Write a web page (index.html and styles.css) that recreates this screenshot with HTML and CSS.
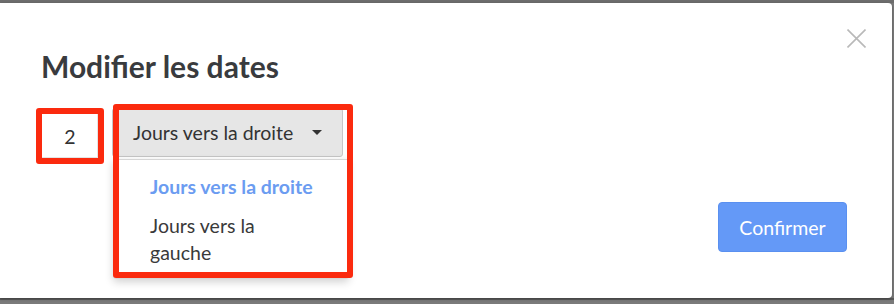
FILE: index.html
```html
<!DOCTYPE html>
<html lang="fr">
<head>
<meta charset="utf-8">
<title>Modifier les dates</title>
<link rel="stylesheet" href="styles.css">
</head>
<body>
<div class="backdrop">
  <div class="modal">
    <button class="close" aria-label="Fermer">
      <svg width="19" height="19" viewBox="0 0 19 19"><path d="M0.5 0.5 L18.5 18.5 M18.5 0.5 L0.5 18.5" stroke="#b9b9b9" stroke-width="1.6" fill="none"/></svg>
    </button>
    <h1 class="title">Modifier les dates</h1>
    <div class="row">
      <div class="num-box"><span class="num">2</span></div>
      <div class="select-wrap">
        <div class="select-btn">
          <span>Jours vers la droite</span>
          <span class="caret"></span>
        </div>
        <ul class="menu">
          <li class="item active">Jours vers la droite</li>
          <li class="item">Jours vers la gauche</li>
        </ul>
        <div class="mark"></div>
      </div>
    </div>
    <div class="footer">
      <button class="confirm">Confirmer</button>
    </div>
  </div>
  <div class="bottom-bar"></div>
</div>
</body>
</html>
```
FILE: styles.css
```css
* { box-sizing: border-box; }
html, body { margin: 0; padding: 0; }
body {
  width: 894px;
  height: 304px;
  overflow: hidden;
  background: #787878;
  font-family: Lato, "Noto Sans", sans-serif;
}
.backdrop {
  padding-top: 3px;
  background: linear-gradient(#6d6d6d, #6d6d6d) top/100% 3px no-repeat, #7a7a7a;
  height: 304px;
}
.modal {
  position: relative;
  width: 892px;
  height: 295px;
  background: #fff;
  border-radius: 0 4px 4px 0;
  padding: 45px 45px 0 41px;
  box-shadow: 0 1px 3px rgba(0,0,0,0.3);
}
.bottom-bar {
  height: 2px;
  background: #5a5a5a;
}
.close {
  position: absolute;
  top: 26px;
  right: 26px;
  width: 19px;
  height: 19px;
  padding: 0;
  border: 0;
  background: none;
  display: block;
}
.close svg { display: block; }
.title {
  margin: 0;
  font-size: 30px;
  line-height: 36px;
  font-weight: 700;
  color: #393b3e;
}
.row {
  display: flex;
  align-items: flex-start;
  gap: 8px;
  margin: 24px 0 0 -5px;
}
.num-box {
  width: 68px;
  height: 56px;
  border: 6px solid #fb2a0e;
  border-radius: 3px;
  background: #fff;
  display: flex;
  align-items: center;
  justify-content: center;
  box-shadow: inset -1px -1px 0 #e4e4e4;
}
.num {
  font-size: 19.5px;
  color: #333;
}
.select-wrap {
  position: relative;
  width: 231px;
}
.select-btn {
  height: 49px;
  background: #e6e6e6;
  border: 1px solid #c6c6c6;
  border-radius: 3px;
  display: flex;
  align-items: center;
  justify-content: space-between;
  padding: 0 20px 0 20px;
  font-size: 19.5px;
  color: #333;
}
.caret {
  width: 0;
  height: 0;
  border-left: 5px solid transparent;
  border-right: 5px solid transparent;
  border-top: 5px solid #333;
}
.menu {
  position: absolute;
  left: 1px;
  top: 51px;
  width: 236px;
  margin: 0;
  padding: 13px 0 12px 36px;
  list-style: none;
  background: #fff;
  border: 1px solid #d6d6d6;
  border-radius: 0 0 3px 3px;
  box-shadow: 0 3px 8px rgba(0,0,0,0.18);
}
.item {
  width: 166px;
  font-size: 19.5px;
  line-height: 27px;
  color: #3a3a3a;
}
.item.active {
  font-weight: 700;
  color: #6b9cf1;
  margin-bottom: 12px;
}
.mark {
  position: absolute;
  left: 1px;
  top: -4px;
  width: 240px;
  height: 174px;
  border: 6px solid #fb2a0e;
  border-radius: 3px;
}
.footer {
  display: flex;
  justify-content: flex-end;
  margin-top: 38px;
}
.confirm {
  width: 129px;
  height: 50px;
  border: 1px solid #5a90f0;
  border-radius: 4px;
  background: #6499f7;
  color: #fff;
  font-family: Lato, "Noto Sans", sans-serif;
  font-size: 19.5px;
  padding: 0;
}
```
